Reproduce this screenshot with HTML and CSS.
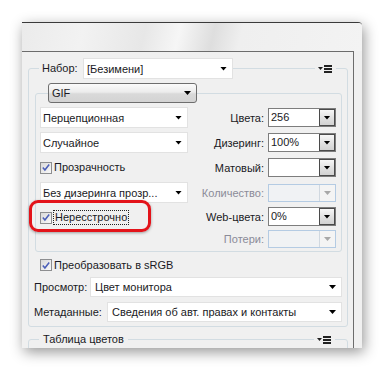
FILE: index.html
```html
<!DOCTYPE html>
<html lang="ru">
<head>
<meta charset="utf-8">
<link rel="stylesheet" href="styles.css">
</head>
<body>
<div class="window">
  <div class="titlebar"></div>
  <div class="panel">
    <section class="group preset">
      <div class="group-head">
        <span class="legend legend-preset">Набор:</span>
        <div class="select select-preset"><span class="sel-text">[Безимени]</span><span class="arrow"></span></div>
        <span class="head-line"></span>
        <span class="menu-btn"><svg width="14" height="8" viewBox="0 0 14 8"><polygon points="0,2 5,2 2.5,5" fill="#222"/><rect x="6" y="0" width="8" height="2" fill="#222"/><rect x="6" y="3" width="8" height="2" fill="#222"/><rect x="6" y="6" width="8" height="2" fill="#222"/></svg></span>
      </div>
      <section class="group inner">
        <div class="group-head">
          <div class="select select-format"><span class="sel-text">GIF</span><span class="arrow"></span></div>
        </div>
        <div class="cols">
          <div class="col-left">
            <div class="select select-plain"><span class="sel-text">Перцепционная</span><span class="arrow"></span></div>
            <div class="select select-plain"><span class="sel-text">Случайное</span><span class="arrow"></span></div>
            <div class="check-row"><span class="cb"><svg width="11" height="11" viewBox="0 0 11 11"><path d="M2 5.5 L4.3 8.2 L9 2.2" fill="none" stroke="#4b5fb8" stroke-width="1.7"/></svg></span><span class="cb-text">Прозрачность</span></div>
            <div class="select select-plain"><span class="sel-text">Без дизеринга прозр...</span><span class="arrow"></span></div>
            <div class="check-row marked"><span class="cb"><svg width="11" height="11" viewBox="0 0 11 11"><path d="M2 5.5 L4.3 8.2 L9 2.2" fill="none" stroke="#4b5fb8" stroke-width="1.7"/></svg></span><span class="cb-text focus">Нересстрочно</span><span class="highlight"></span></div>
          </div>
          <div class="col-right">
            <div class="field-row"><span class="field-label">Цвета:</span><div class="combo"><span class="combo-value">256</span><span class="combo-btn"><span class="arrow"></span></span></div></div>
            <div class="field-row"><span class="field-label">Дизеринг:</span><div class="combo"><span class="combo-value">100%</span><span class="combo-btn"><span class="arrow"></span></span></div></div>
            <div class="field-row"><span class="field-label">Матовый:</span><div class="combo"><span class="combo-value"></span><span class="combo-btn"><span class="arrow"></span></span></div></div>
            <div class="field-row disabled r-amount"><span class="field-label">Количество:</span><div class="combo"><span class="combo-value"></span><span class="combo-btn"><span class="arrow"></span></span></div></div>
            <div class="field-row r-web"><span class="field-label">Web-цвета:</span><div class="combo"><span class="combo-value">0%</span><span class="combo-btn"><span class="arrow"></span></span></div></div>
            <div class="field-row disabled r-loss"><span class="field-label">Потери:</span><div class="combo"><span class="combo-value"></span><span class="combo-btn"><span class="arrow"></span></span></div></div>
          </div>
        </div>
      </section>
      <div class="check-row srgb"><span class="cb"><svg width="11" height="11" viewBox="0 0 11 11"><path d="M2 5.5 L4.3 8.2 L9 2.2" fill="none" stroke="#4b5fb8" stroke-width="1.7"/></svg></span><span class="cb-text">Преобразовать в sRGB</span></div>
      <div class="line-row"><span class="line-label label-preview">Просмотр:</span><div class="select select-wide"><span class="sel-text">Цвет монитора</span><span class="arrow"></span></div></div>
      <div class="line-row row-meta"><span class="line-label label-meta">Метаданные:</span><div class="select select-wide"><span class="sel-text">Сведения об авт. правах и контакты</span><span class="arrow"></span></div></div>
    </section>
    <section class="group table">
      <div class="group-head">
        <span class="legend legend-table">Таблица цветов</span>
        <span class="head-line"></span>
        <span class="menu-btn"><svg width="14" height="8" viewBox="0 0 14 8"><polygon points="0,2 5,2 2.5,5" fill="#222"/><rect x="6" y="0" width="8" height="2" fill="#222"/><rect x="6" y="3" width="8" height="2" fill="#222"/><rect x="6" y="6" width="8" height="2" fill="#222"/></svg></span>
      </div>
    </section>
  </div>
</div>
</body>
</html>
```

FILE: styles.css
```css
* { box-sizing: border-box; }

body {
  margin: 0;
  background: #ffffff;
  font-family: "Liberation Sans", Arial, sans-serif;
  font-size: 11px;
  color: #1a1a24;
  width: 383px;
  height: 371px;
  overflow: hidden;
}

.window {
  margin: 22px 0 0 22px;
  width: 340px;
  height: 326px;
  background: #f0f0f0;
  border-top: 1px solid #3a3a3a;
  border-top-right-radius: 4px;
  box-shadow: 2px 4px 14px rgba(0, 0, 0, 0.42);
  display: flex;
  flex-direction: column;
  overflow: hidden;
}

.titlebar {
  height: 28px;
  flex: none;
  background: linear-gradient(103deg, #ebebeb 0%, #f2f2f2 18%, #e7e7e7 36%, #f6f6f6 46%, #dedede 56%, #efefef 64%, #f3f3f3 100%);
}

.panel {
  width: 332px;
  flex: 1;
  border-top: 1px solid #6c6c6c;
  border-right: 1px solid #6c6c6c;
  overflow: hidden;
}

.group {
  border: 1px solid #d2dce2;
  border-radius: 3px;
}

.preset {
  margin: 16px 0 0 6px;
  width: 320px;
  padding: 0 5px 4px 6px;
}

.table {
  margin: 12px 0 0 6px;
  width: 320px;
  height: 40px;
}

.group-head {
  display: flex;
  align-items: center;
  height: 21px;
  margin-top: -11px;
}

.legend {
  background: #f0f0f0;
  padding-left: 3px;
  line-height: 13px;
}

.legend-preset { width: 44px; margin-left: 4px; }

.legend-table { padding-right: 4px; margin-left: 10px; padding-left: 4px; }

.head-line { flex: 1; }

.menu-btn {
  background: #f0f0f0;
  padding: 0 4px 0 3px;
  margin-right: 6px;
  height: 10px;
  display: flex;
  align-items: center;
}

.table .menu-btn { margin-right: 12px; }

.select {
  display: flex;
  align-items: center;
  background: #ffffff;
  border: 1px solid #e2e2e2;
  height: 21px;
}

.sel-text {
  flex: 1;
  padding-left: 2px;
  white-space: nowrap;
  overflow: hidden;
}

.arrow {
  width: 7px;
  height: 4px;
  background: #000;
  clip-path: polygon(0 0, 100% 0, 50% 100%);
  flex: none;
}

.select .arrow { margin-right: 5px; }

.select-preset {
  width: 150px;
}

.select-preset .sel-text { padding-left: 3px; }

.inner {
  margin-top: 14px;
  width: 307px;
  padding: 0 5px 3px 4px;
}

.inner .group-head {
  height: 20px;
  margin-top: -11px;
}

.select-format {
  margin-left: 8px;
  width: 149px;
  height: 20px;
  border: 1px solid #6e6e6e;
  border-radius: 3px;
  background: linear-gradient(#fbfbfb, #ececec 45%, #d9d9d9 55%, #d3d3d3);
}

.select-format .sel-text { padding-left: 3px; }

.cols {
  display: flex;
  justify-content: space-between;
  margin-top: 4px;
}

.col-left {
  width: 148px;
  display: flex;
  flex-direction: column;
  gap: 4px;
}

.select-plain { width: 148px; }

.check-row {
  display: flex;
  align-items: center;
  height: 21px;
  position: relative;
}

.cb {
  width: 12px;
  height: 12px;
  border: 1px solid #8d8e90;
  background: linear-gradient(135deg, #d9d9d9, #f9f9f9);
  display: flex;
  align-items: center;
  justify-content: center;
  flex: none;
}

.cb-text {
  margin-left: 2px;
  white-space: nowrap;
  line-height: 13px;
}

.focus {
  outline: 1px dotted #222;
  padding: 0 1px;
}

.highlight {
  position: absolute;
  left: -11px;
  top: -7px;
  width: 122px;
  height: 32px;
  border: 3px solid #e3131a;
  border-radius: 9px;
  box-shadow: 0 1px 3px rgba(0, 0, 0, 0.35);
  pointer-events: none;
}

.col-right {
  display: flex;
  flex-direction: column;
  align-items: flex-end;
  margin-top: 1px;
}

.field-row {
  display: flex;
  align-items: center;
  height: 19px;
  margin-top: 6px;
}

.field-row:first-child { margin-top: 0; }

.field-row.r-amount { margin-top: 7px; height: 18px; }
.field-row.r-web { margin-top: 5px; }
.field-row.r-loss { margin-top: 4px; height: 18px; }

.field-label {
  margin-right: 4px;
  white-space: nowrap;
}

.combo {
  width: 68px;
  height: 100%;
  display: flex;
  border: 1px solid #7d7d7d;
  background: #ffffff;
}

.combo-value {
  flex: 1;
  padding-left: 2px;
  line-height: 17px;
}

.combo-btn {
  width: 16px;
  border: 1px solid #4a4a4a;
  background: linear-gradient(#f7f7f7, #e2e2e2 50%, #d2d2d2);
  display: flex;
  align-items: center;
  justify-content: center;
}

.disabled .field-label { color: #8b8b98; }

.disabled .combo {
  border-color: #b4cbe3;
  background: #f0f2f4;
}

.disabled .combo-btn {
  border: none;
  border-left: 1px solid #d0d8e0;
  background: #f4f4f4;
}

.disabled .arrow { background: #a8a8a8; }

.srgb {
  height: 16px;
  margin: 5px 0 0 5px;
}

.line-row {
  display: flex;
  align-items: center;
  height: 20px;
  margin-top: 4px;
}

.row-meta { margin-top: 5px; }

.line-label {
  margin-left: -1px;
  white-space: nowrap;
}

.label-preview { width: 56px; }
.label-meta { width: 73px; }

.select-wide {
  flex: 1;
  height: 20px;
}

.select-wide .sel-text { padding-left: 4px; }
```
